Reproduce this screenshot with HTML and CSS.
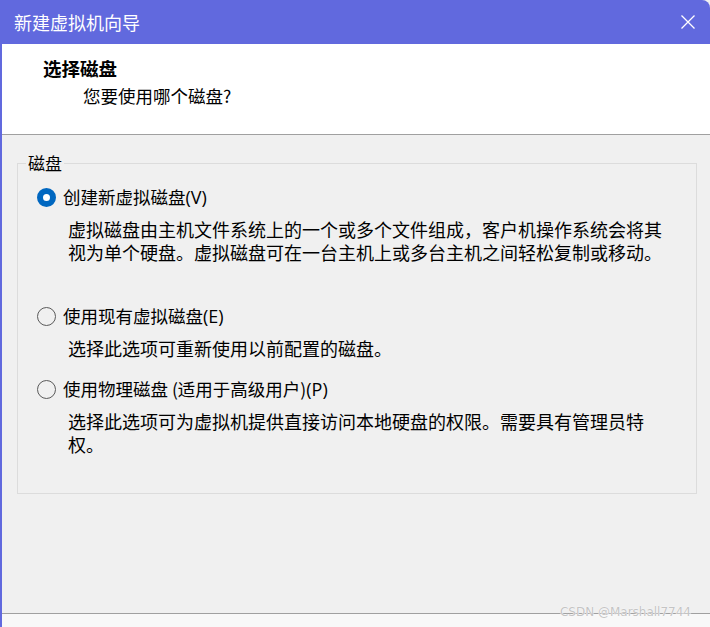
FILE: index.html
```html
<!DOCTYPE html>
<html lang="zh-CN">
<head>
    <meta charset="UTF-8">
    <title>新建虚拟机向导</title>
    <link rel="stylesheet" href="styles.css">
</head>
<body>
    <div class="wizard-window">
        <div class="title-bar">
            <span class="title-text">新建虚拟机向导</span>
            <button class="close-btn" aria-label="关闭">
                <svg width="16" height="16" viewBox="0 0 16 16">
                    <path d="M1.5 1.5 L14.5 14.5 M14.5 1.5 L1.5 14.5" stroke="#fff" stroke-width="1.3" fill="none"/>
                </svg>
            </button>
        </div>

        <div class="wizard-header">
            <div class="header-title">选择磁盘</div>
            <div class="header-subtitle">您要使用哪个磁盘?</div>
        </div>

        <div class="wizard-body">
            <fieldset class="disk-group">
                <legend>磁盘</legend>

                <div class="option option-new">
                    <label class="radio-row">
                        <span class="radio checked"></span>
                        <span class="radio-label">创建新虚拟磁盘<span class="key">(V)</span></span>
                    </label>
                    <p class="option-desc">虚拟磁盘由主机文件系统上的一个或多个文件组成，客户机操作系统会将其<br>视为单个硬盘。虚拟磁盘可在一台主机上或多台主机之间轻松复制或移动。</p>
                </div>

                <div class="option option-existing">
                    <label class="radio-row">
                        <span class="radio"></span>
                        <span class="radio-label">使用现有虚拟磁盘<span class="key">(E)</span></span>
                    </label>
                    <p class="option-desc">选择此选项可重新使用以前配置的磁盘。</p>
                </div>

                <div class="option">
                    <label class="radio-row">
                        <span class="radio"></span>
                        <span class="radio-label">使用物理磁盘 (适用于高级用户)<span class="key">(P)</span></span>
                    </label>
                    <p class="option-desc">选择此选项可为虚拟机提供直接访问本地硬盘的权限。需要具有管理员特<br>权。</p>
                </div>
            </fieldset>
        </div>

        <div class="wizard-footer"></div>
    </div>
    <div class="watermark">CSDN @Marshall7744</div>
</body>
</html>
```

FILE: styles.css
```css
html, body {
    margin: 0;
    padding: 0;
}

body {
    width: 710px;
    height: 627px;
    overflow: hidden;
    position: relative;
    background: #f0f0f0;
    font-family: "Noto Sans CJK SC", "Noto Sans", sans-serif;
    color: #000;
}

.wizard-window {
    height: 627px;
    display: flex;
    flex-direction: column;
    border-left: 2px solid #6169de;
    box-sizing: border-box;
}

.title-bar {
    height: 44px;
    flex: none;
    background: #6169de;
    color: #fff;
    display: flex;
    align-items: center;
    justify-content: space-between;
    padding: 0 14px 0 12px;
    border-top-right-radius: 8px;
}

.title-text {
    font-size: 18px;
    line-height: 24px;
}

.close-btn {
    background: none;
    border: none;
    padding: 0;
    width: 16px;
    height: 16px;
    display: flex;
    cursor: pointer;
}

.wizard-header {
    flex: none;
    height: 91px;
    box-sizing: border-box;
    background: #fff;
    border-bottom: 1px solid #a0a0a0;
    padding: 12px 0 0 41px;
}

.header-title {
    font-size: 18.5px;
    font-weight: bold;
    line-height: 24px;
}

.header-subtitle {
    margin: 4px 0 0 40px;
    font-size: 17.5px;
    line-height: 24px;
}

.wizard-body {
    flex: 1;
    padding: 16px 13px 0 15px;
}

.disk-group {
    margin: 0;
    height: 343px;
    box-sizing: border-box;
    border: 1px solid #dcdcdc;
    padding: 10px 8px 0 8px;
}

.disk-group legend {
    padding: 0 2px;
    font-size: 17px;
    line-height: 24px;
}

.radio-row {
    display: flex;
    align-items: center;
    height: 24px;
    margin-left: 11px;
}

.radio {
    width: 19px;
    height: 19px;
    box-sizing: border-box;
    border: 1px solid #5a5a5a;
    border-radius: 50%;
    margin-right: 7px;
    flex: none;
}

.radio.checked {
    border: 6px solid #0067c0;
    background: #fff;
}

.radio-label {
    font-size: 17.5px;
    line-height: 24px;
}

.radio-label .key {
    font-family: "Open Sans", "Noto Sans", sans-serif;
    font-size: 18px;
}

.option-desc {
    margin: 9px 0 0 42px;
    font-size: 18px;
    line-height: 23px;
}

.option-new {
    margin-bottom: 40px;
}

.option-existing {
    margin-bottom: 17px;
}

.wizard-footer {
    flex: none;
    height: 13px;
    border-top: 1px solid #a0a0a0;
    background: #f8f8f8;
}

.watermark {
    position: absolute;
    right: 19px;
    top: 605px;
    font-family: "DejaVu Sans", sans-serif;
    font-size: 12px;
    color: #c4c4c4;
    text-shadow: 0 0 1px #fff, 0 0 1px #fff;
}
```
